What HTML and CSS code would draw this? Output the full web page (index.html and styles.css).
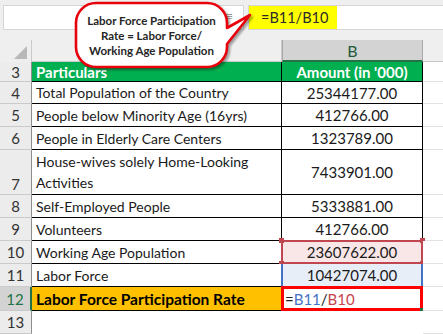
FILE: index.html
```html
<!DOCTYPE html>
<html>
<head>
<meta charset="utf-8">
<link rel="stylesheet" href="styles.css">
</head>
<body>
<div class="app">
  <div class="fbar">
    <div class="namebox"><span class="fxmark">&#8801;</span></div>
    <div class="fsep"></div>
    <div class="finput"><span class="fhl">=B11/B10</span></div>
  </div>
  <div class="sheet">
    <div class="corner"><span class="tri"></span></div>
    <div class="colhead cola"></div>
    <div class="colhead colb">B</div>
    <div class="colhead colc"></div>

    <div class="rh">3</div>
    <div class="cell hd">Particulars</div>
    <div class="cell hd num">Amount (in '000)</div>
    <div class="cell cc"></div>

    <div class="rh">4</div>
    <div class="cell">Total Population of the Country</div>
    <div class="cell num">25344177.00</div>
    <div class="cell cc"></div>

    <div class="rh">5</div>
    <div class="cell">People below Minority Age (16yrs)</div>
    <div class="cell num">412766.00</div>
    <div class="cell cc"></div>

    <div class="rh">6</div>
    <div class="cell">People in Elderly Care Centers</div>
    <div class="cell num">1323789.00</div>
    <div class="cell cc"></div>

    <div class="rh rh-bottom">7</div>
    <div class="cell wrap">House-wives solely Home-Looking Activities</div>
    <div class="cell num">7433901.00</div>
    <div class="cell cc"></div>

    <div class="rh">8</div>
    <div class="cell">Self-Employed People</div>
    <div class="cell num">5333881.00</div>
    <div class="cell cc"></div>

    <div class="rh">9</div>
    <div class="cell">Volunteers</div>
    <div class="cell num">412766.00</div>
    <div class="cell cc"></div>

    <div class="rh">10</div>
    <div class="cell">Working Age Population</div>
    <div class="cell num ref-red">23607622.00<i class="h tl"></i><i class="h tr"></i><i class="h bl"></i><i class="h br"></i></div>
    <div class="cell cc"></div>

    <div class="rh">11</div>
    <div class="cell">Labor Force</div>
    <div class="cell num ref-blue">10427074.00</div>
    <div class="cell cc"></div>

    <div class="rh rh-active">12</div>
    <div class="cell rate">Labor Force Participation Rate</div>
    <div class="cell edit">=<span class="blue">B11</span>/<span class="red">B10</span><i class="fill"></i></div>
    <div class="cell cc"></div>

    <div class="rh">13</div>
    <div class="cell empty"></div>
    <div class="cell empty"></div>
    <div class="cell cc"></div>
  </div>

  <div class="callout">
    <svg class="bubble" width="190" height="76" viewBox="0 0 190 76">
      <path d="M 26 3 H 137 A 20 20 0 0 1 157 23 V 28 L 180 15 L 157 44 V 47 A 20 20 0 0 1 137 67 H 26 A 20 20 0 0 1 6 47 V 23 A 20 20 0 0 1 26 3 Z" fill="#ffffff" stroke="#e8000b" stroke-width="2.6" stroke-linejoin="round"/>
    </svg>
    <div class="ctext">Labor Force Participation<br>Rate = Labor Force/<br>Working Age Population</div>
  </div>
</div>
</body>
</html>
```

FILE: styles.css
```css
* { box-sizing: border-box; }
html, body { margin: 0; padding: 0; background: #ffffff; }
.app {
  position: relative;
  width: 443px;
  height: 334px;
  overflow: hidden;
  font-family: Lato, "Open Sans", sans-serif;
  font-size: 14px;
  color: #1a1a1a;
}
.fbar {
  height: 40px;
  background: #efefef;
  display: flex;
  align-items: flex-start;
  padding-top: 5px;
}
.namebox {
  margin-left: 3px;
  width: 241px;
  height: 25px;
  background: #fff;
  border: 1px solid #d6d6d6;
  position: relative;
}
.fxmark {
  position: absolute;
  right: 10px;
  top: 2px;
  color: #9a9a9a;
  font-size: 13px;
}
.fsep { width: 4px; }
.finput {
  flex: 1;
  height: 25px;
  background: #fff;
  border: 1px solid #d6d6d6;
  border-right: none;
}
.fhl {
  display: inline-block;
  height: 23px;
  width: 88px;
  background: #ffff00;
  padding-left: 12px;
  line-height: 23px;
  font-size: 14.5px;
  color: #2b2b2b;
}
.sheet {
  display: grid;
  grid-template-columns: 32px 250px 141px 20px;
  grid-template-rows: 22px 20px 22px 23px 23px 45px 23px 23px 23px 23px 24px 23px;
}
.corner {
  background: #efefef;
  border-right: 1px solid #c9c9c9;
  position: relative;
}
.tri {
  position: absolute;
  right: 4px;
  bottom: 3px;
  width: 0;
  height: 0;
  border-left: 13px solid transparent;
  border-bottom: 13px solid #b9b9b9;
}
.colhead {
  background: #efefef;
  border-right: 1px solid #c9c9c9;
  border-bottom: 1px solid #c9c9c9;
  text-align: center;
  line-height: 21px;
  color: #444;
  font-size: 16px;
}
.colb {
  background: #d3d3d3;
  border-bottom: 2px solid #217346;
  color: #215a3a;
  border-right: 1px solid #a8a8a8;
  border-left: 1px solid #a8a8a8;
}
.colc { border-right: none; }
.rh {
  background: #ececec;
  border-right: 1px solid #8e8e8e;
  border-bottom: 1px solid #cacaca;
  text-align: center;
  display: flex;
  align-items: center;
  justify-content: center;
  color: #333;
  font-size: 15px;
}
.rh-bottom { align-items: flex-end; padding-bottom: 1px; }
.rh-active {
  background: #d3d3d3;
  color: #217346;
  border-right: 2px solid #217346;
}
.cell {
  border-right: 1px solid #000;
  border-bottom: 1px solid #000;
  padding: 0 4px;
  display: flex;
  align-items: center;
  white-space: nowrap;
  background: #fff;
  position: relative;
}
.num { justify-content: center; font-size: 15px; }
.cc {
  border-right: none;
  border-bottom: 1px solid #e2e2e2;
}
.hd {
  background: #00b050;
  color: #ffffff;
  font-weight: bold;
  font-size: 15px;
}
.wrap {
  white-space: normal;
  align-items: flex-start;
  line-height: 21px;
  padding-top: 1px;
}
.ref-red {
  background: #f9e6e6;
  border: 2px solid #c0474f;
  margin: -1px 0 0 -1px;
}
.ref-blue {
  background: #e8eef8;
  border-left: 2px solid #4472c4;
  border-right: 2px solid #4472c4;
  border-bottom: 1px solid #000;
  margin-left: -1px;
}
.h {
  position: absolute;
  width: 5px;
  height: 5px;
  background: #c0474f;
}
.tl { left: -4px; top: -4px; }
.tr { right: -4px; top: -4px; }
.bl { left: -4px; bottom: -4px; }
.br { right: -4px; bottom: -4px; }
.rate {
  background: #ffc000;
  font-weight: bold;
  font-size: 15.5px;
  color: #000;
}
.edit {
  border: 3px solid #ff0000;
  margin: -1px 0 0 -1px;
  padding-left: 1px;
  color: #222;
  font-size: 15px;
}
.blue { color: #4472c4; }
.red { color: #c8434b; }
.fill {
  position: absolute;
  right: -4px;
  bottom: -4px;
  width: 4px;
  height: 4px;
  background: #217346;
}
.empty {
  border-right: none;
  border-bottom: none;
}
.callout {
  position: absolute;
  left: 70px;
  top: 0;
  width: 190px;
  height: 76px;
}
.bubble {
  position: absolute;
  left: 0;
  top: 0;
  filter: drop-shadow(2px 2px 1px rgba(0,0,0,0.35));
}
.ctext {
  position: absolute;
  left: 6px;
  width: 151px;
  top: 13px;
  text-align: center;
  font-weight: bold;
  font-size: 11.5px;
  line-height: 15px;
  color: #262626;
}
```
